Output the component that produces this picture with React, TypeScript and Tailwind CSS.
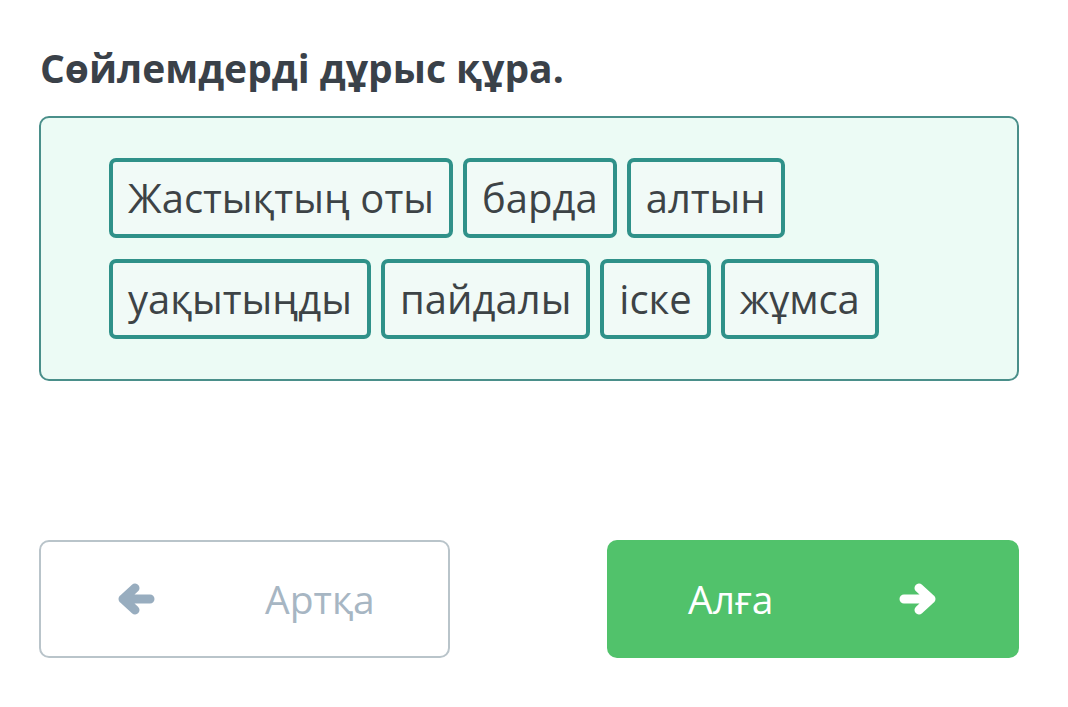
const rows = [
  ["Жастықтың оты", "барда", "алтын"],
  ["уақытыңды", "пайдалы", "іске", "жұмса"],
];

function Arrow({ dir, className }: { dir: "left" | "right"; className: string }) {
  return (
    <svg
      viewBox="0 0 38 34"
      className={className}
      fill="none"
      stroke="currentColor"
      strokeWidth={9}
      strokeLinecap="round"
      strokeLinejoin="round"
      style={dir === "right" ? { transform: "scaleX(-1)" } : undefined}
    >
      <path d="M6 17H33M18 6L6 17L18 28" />
    </svg>
  );
}

function Chip({ word }: { word: string }) {
  return (
    <div className="flex h-[80px] items-center rounded-[7px] border-[4px] border-[#2f9189] bg-[#f1faf7] pl-[15px] pr-[15px] text-[40px] leading-none text-[#3d4346]">
      {word}
    </div>
  );
}

export default function App() {
  return (
    <div className="min-h-[707px] w-[1068px] bg-white pl-[39px] pr-[49px] pt-[42px] font-['Open_Sans',sans-serif]">
      <h1 className="pl-[1px] text-[39px] font-bold leading-[52px] text-[#3a4149]">
        Сөйлемдерді дұрыс құра.
      </h1>

      <div className="mt-[22px] flex h-[265px] flex-col gap-[21px] rounded-[10px] border-2 border-[#4a8f8a] bg-[#ecfbf5] pl-[68px] pt-[40px]">
        {rows.map((row, i) => (
          <div key={i} className="flex gap-[10px]">
            {row.map((w) => (
              <Chip key={w} word={w} />
            ))}
          </div>
        ))}
      </div>

      <div className="mt-[159px] flex justify-between">
        <button className="flex h-[118px] w-[411px] items-center gap-[110px] rounded-[10px] border-2 border-[#b9c4ca] bg-white pl-[76px] text-[39px] text-[#a7b6c3]">
          <Arrow dir="left" className="h-[34px] w-[38px] text-[#98adbf]" />
          <span>Артқа</span>
        </button>
        <button className="flex h-[118px] w-[412px] items-center gap-[126px] rounded-[10px] bg-[#51c26b] pl-[81px] text-[39px] text-white">
          <span>Алға</span>
          <Arrow dir="right" className="h-[34px] w-[38px] text-white" />
        </button>
      </div>
    </div>
  );
}
